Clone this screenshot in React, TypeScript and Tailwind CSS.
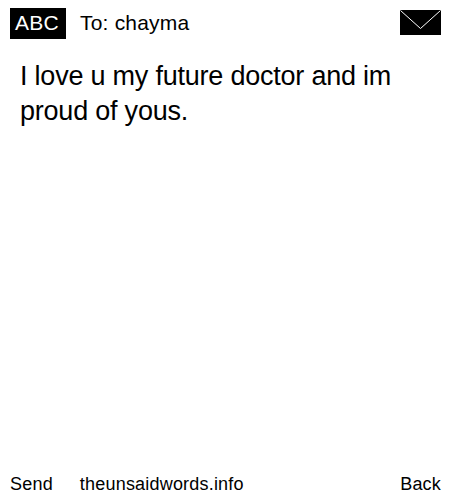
export default function App() {
  return (
    <div className="flex h-[500px] w-[450px] flex-col bg-white font-['Liberation_Sans',Arial,sans-serif] tracking-[0.2px] text-black">
      <div className="flex items-start pl-[10px] pr-[9px] pt-2">
        <div className="flex h-[31px] w-[56px] items-center justify-center bg-black pb-[2px] pr-[2px] text-[21px] text-white">ABC</div>
        <p className="ml-[14px] h-[31px] text-[21px] leading-[29px]">To: chayma</p>
        <svg className="ml-auto mt-[2px]" width="41" height="25" viewBox="0 0 41 25">
          <rect width="41" height="25" fill="#000" />
          <path d="M0.5 0.5 L20.5 18.5 L40.5 0.5" stroke="#fff" strokeWidth="1" fill="none" />
        </svg>
      </div>
      <p className="mt-5 px-5 text-[27px] leading-[35px] tracking-[-0.22px]">I love u my future doctor and im proud of yous.</p>
      <div className="mt-auto flex pb-[2px] pl-[10px] pr-[9px] text-lg">
        <span>Send</span>
        <span className="ml-[27px]">theunsaidwords.info</span>
        <span className="ml-auto">Back</span>
      </div>
    </div>
  );
}
